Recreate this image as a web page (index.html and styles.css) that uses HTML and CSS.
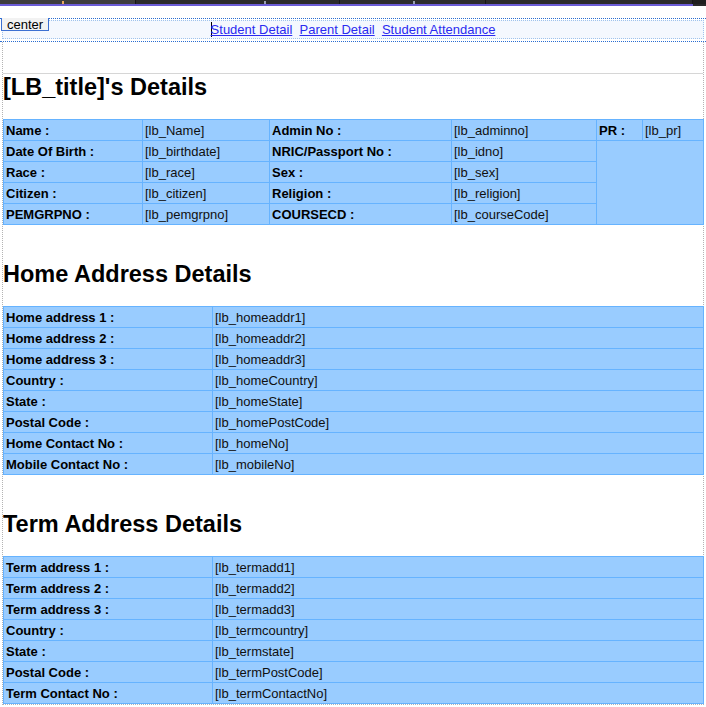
FILE: index.html
```html
<!DOCTYPE html>
<html>
<head>
<meta charset="utf-8">
<title>Student Details</title>
<link rel="stylesheet" href="styles.css">
</head>
<body>
<div class="topbar">
  <div class="tab tab-a"><span class="mark mark-a"></span></div>
  <div class="tab tab-b"><span class="mark"></span></div>
  <div class="tab tab-c"><span class="mark"></span></div>
  <div class="tab tab-d"></div>
</div>
<div class="accent"></div>
<div class="designer">
  <div class="tag">center</div>
  <div class="center-frame">
    <nav class="nav">
      <span class="caret"></span><a href="#">Student Detail</a>&nbsp; <a href="#">Parent Detail</a>&nbsp; <a href="#">Student Attendance</a>
    </nav>
  </div>
</div>
<div class="main">
  <div class="rule"></div>
  <h2 class="section-title">[LB_title]'s Details</h2>
  <table class="grid grid-main">
    <colgroup>
      <col class="c1"><col class="c2"><col class="c3"><col class="c4"><col class="c5"><col class="c6">
    </colgroup>
    <tr>
      <td class="lbl">Name :</td><td>[lb_Name]</td>
      <td class="lbl">Admin No :</td><td>[lb_adminno]</td>
      <td class="lbl">PR :</td><td>[lb_pr]</td>
    </tr>
    <tr>
      <td class="lbl">Date Of Birth :</td><td>[lb_birthdate]</td>
      <td class="lbl">NRIC/Passport No :</td><td>[lb_idno]</td>
      <td rowspan="4" colspan="2"></td>
    </tr>
    <tr>
      <td class="lbl">Race :</td><td>[lb_race]</td>
      <td class="lbl">Sex :</td><td>[lb_sex]</td>
    </tr>
    <tr>
      <td class="lbl">Citizen :</td><td>[lb_citizen]</td>
      <td class="lbl">Religion :</td><td>[lb_religion]</td>
    </tr>
    <tr>
      <td class="lbl">PEMGRPNO :</td><td>[lb_pemgrpno]</td>
      <td class="lbl">COURSECD :</td><td>[lb_courseCode]</td>
    </tr>
  </table>

  <h2 class="section-title spaced">Home Address Details</h2>
  <table class="grid grid-addr">
    <colgroup><col class="a1"><col class="a2"></colgroup>
    <tr><td class="lbl">Home address 1 :</td><td>[lb_homeaddr1]</td></tr>
    <tr><td class="lbl">Home address 2 :</td><td>[lb_homeaddr2]</td></tr>
    <tr><td class="lbl">Home address 3 :</td><td>[lb_homeaddr3]</td></tr>
    <tr><td class="lbl">Country :</td><td>[lb_homeCountry]</td></tr>
    <tr><td class="lbl">State :</td><td>[lb_homeState]</td></tr>
    <tr><td class="lbl">Postal Code :</td><td>[lb_homePostCode]</td></tr>
    <tr><td class="lbl">Home Contact No :</td><td>[lb_homeNo]</td></tr>
    <tr><td class="lbl">Mobile Contact No :</td><td>[lb_mobileNo]</td></tr>
  </table>

  <h2 class="section-title spaced">Term Address Details</h2>
  <table class="grid grid-addr">
    <colgroup><col class="a1"><col class="a2"></colgroup>
    <tr><td class="lbl">Term address 1 :</td><td>[lb_termadd1]</td></tr>
    <tr><td class="lbl">Term address 2 :</td><td>[lb_termadd2]</td></tr>
    <tr><td class="lbl">Term address 3 :</td><td>[lb_termadd3]</td></tr>
    <tr><td class="lbl">Country :</td><td>[lb_termcountry]</td></tr>
    <tr><td class="lbl">State :</td><td>[lb_termstate]</td></tr>
    <tr><td class="lbl">Postal Code :</td><td>[lb_termPostCode]</td></tr>
    <tr><td class="lbl">Term Contact No :</td><td>[lb_termContactNo]</td></tr>
  </table>
</div>
</body>
</html>
```
FILE: styles.css
```css
html, body {
  margin: 0;
  padding: 0;
  background: #ffffff;
}
body {
  font-family: "Liberation Sans", Arial, sans-serif;
  font-size: 13px;
  color: #000000;
}

/* editor chrome strip */
.topbar {
  display: flex;
  height: 4px;
  background: #1f1f1f;
  overflow: hidden;
}
.tab {
  position: relative;
  height: 4px;
  box-sizing: border-box;
  border-right: 1px solid #161616;
}
.tab-a { width: 136px; background: #3e3e3e; }
.tab-b { width: 204px; background: #2b2b2b; }
.tab-c { width: 146px; background: #2d2d2d; }
.tab-d { width: 207px; background: #2b2b2b; }
.mark {
  position: absolute;
  left: 128px;
  top: 1px;
  width: 2px;
  height: 3px;
  background: #9aa0b0;
}
.tab-c .mark { left: 73px; }
.mark-a {
  left: 62px;
  background: #e8a860;
}
.accent {
  height: 2px;
  background: linear-gradient(to right, #6b5cd6 0, #6b5cd6 693px, #2a2a2a 693px);
}

/* design surface */
.designer {
  position: relative;
}
.tag {
  position: absolute;
  left: 1px;
  top: 0;
  width: 46px;
  height: 12px;
  line-height: 13px;
  overflow: hidden;
  border: 1px solid #3c70d2;
  border-top: none;
  background: #f2f2f2;
  text-align: center;
  font-size: 13px;
  color: #000;
}
.center-frame {
  margin-top: 12px;
  border-top: 1px dotted #2a6dd0;
  border-bottom: 1px dotted #2a6dd0;
  padding: 1px 2px 2px;
}
.nav {
  display: block;
  height: 17px;
  line-height: 17px;
  border: 1px dotted #9fc3ec;
  background: #f4f8fe;
  text-align: center;
  font-size: 13px;
}
.nav a {
  color: #2a2af0;
  text-decoration: underline;
}
.caret {
  display: inline-block;
  width: 1px;
  height: 15px;
  margin-right: -1px;
  vertical-align: -3px;
  background: #000;
}

.main {
  margin: 0 2px;
  border-left: 1px dotted #b4b4b4;
  border-right: 1px dotted #b4b4b4;
  border-bottom: 1px dotted #b4b4b4;
  padding-top: 31px;
}
.rule {
  border-top: 1px solid #d6d6d6;
}
.section-title {
  margin: 0 0 19px;
  font-size: 23.5px;
  line-height: 26px;
  font-weight: bold;
  color: #000;
}
.section-title.spaced {
  margin-top: 36px;
}

.grid {
  width: 700px;
  border-collapse: collapse;
  table-layout: fixed;
  background: #99ccff;
}
.grid td {
  border: 1px solid #66b3ff;
  padding: 3px 2px 1px;
  line-height: 16px;
  font-size: 13px;
  color: #101010;
  white-space: nowrap;
  overflow: hidden;
  vertical-align: middle;
}
.grid td.lbl {
  font-weight: bold;
  color: #000;
}
.c1 { width: 139px; }
.c2 { width: 127px; }
.c3 { width: 182px; }
.c4 { width: 145px; }
.c5 { width: 46px; }
.c6 { width: 61px; }
.a1 { width: 209px; }
.a2 { width: 491px; }
```
